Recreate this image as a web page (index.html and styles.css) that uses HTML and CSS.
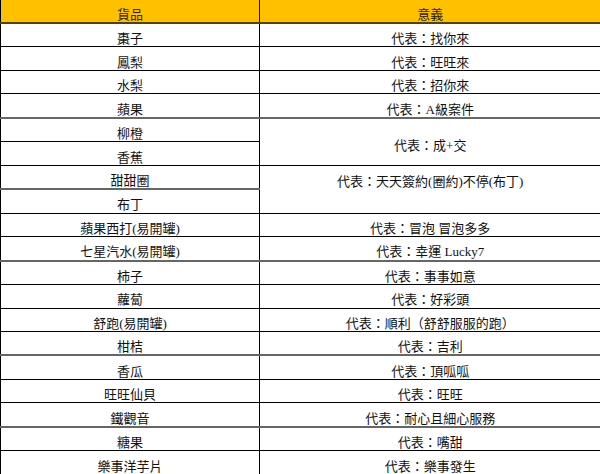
FILE: index.html
```html
<!DOCTYPE html>
<html lang="zh-Hant">
<head>
<meta charset="utf-8">
<title>年節送禮 貨品意義</title>
<link rel="stylesheet" href="styles.css">
</head>
<body>
<table class="sheet">
  <colgroup><col class="col-item"><col class="col-meaning"></colgroup>
  <thead>
    <tr class="head"><th>貨品</th><th>意義</th></tr>
  </thead>
  <tbody>
    <tr><td>棗子</td><td>代表：找你來</td></tr>
    <tr><td>鳳梨</td><td>代表：旺旺來</td></tr>
    <tr><td>水梨</td><td>代表：招你來</td></tr>
    <tr class="thick"><td>蘋果</td><td>代表：A級案件</td></tr>
    <tr><td>柳橙</td><td rowspan="2">代表：成+交</td></tr>
    <tr><td>香蕉</td></tr>
    <tr class="thick-left"><td>甜甜圈</td><td rowspan="2" class="top">代表：天天簽約(圈約)不停(布丁)</td></tr>
    <tr><td>布丁</td></tr>
    <tr><td>蘋果西打(易開罐)</td><td>代表：冒泡 冒泡多多</td></tr>
    <tr class="thick"><td>七星汽水(易開罐)</td><td>代表：幸運 Lucky7</td></tr>
    <tr><td>柿子</td><td>代表：事事如意</td></tr>
    <tr><td>蘿蔔</td><td>代表：好彩頭</td></tr>
    <tr><td>舒跑(易開罐)</td><td>代表：順利（舒舒服服的跑）</td></tr>
    <tr class="thick"><td>柑桔</td><td>代表：吉利</td></tr>
    <tr><td>香瓜</td><td>代表：頂呱呱</td></tr>
    <tr><td>旺旺仙貝</td><td>代表：旺旺</td></tr>
    <tr class="thick"><td>鐵觀音</td><td>代表：耐心且細心服務</td></tr>
    <tr><td>糖果</td><td>代表：嘴甜</td></tr>
    <tr class="last"><td>樂事洋芋片</td><td>代表：樂事發生</td></tr>
  </tbody>
</table>
</body>
</html>
```
FILE: styles.css
```css
html, body {
  margin: 0;
  padding: 0;
  background: #ffffff;
}

body {
  width: 600px;
  height: 474px;
  overflow: hidden;
  font-family: "Liberation Serif", "Noto Sans CJK TC", serif;
  font-size: 13px;
  color: #111111;
}

.sheet {
  width: 600px;
  height: 474px;
  table-layout: fixed;
  border-collapse: collapse;
}

.col-item { width: 259px; }
.col-meaning { width: 341px; }

.sheet th,
.sheet td {
  padding: 8px 0 0 0;
  line-height: 14px;
  text-align: center;
  vertical-align: middle;
  border-bottom: 1px solid #000000;
  font-weight: normal;
  white-space: nowrap;
}

.sheet td:first-child,
.sheet th:first-child {
  border-left: 1px solid #000000;
  border-right: 1px solid #000000;
}

.head th {
  background: #ffc000;
  color: #2a2000;
  border-bottom: 2px solid #4a4030;
}

.thick td {
  border-bottom: 2px solid #666666;
}

.thick-left td:first-child {
  border-bottom: 2px solid #666666;
}

.sheet td.top {
  vertical-align: top;
  padding-top: 9px;
}

.last td {
  border-bottom: none;
}
```
